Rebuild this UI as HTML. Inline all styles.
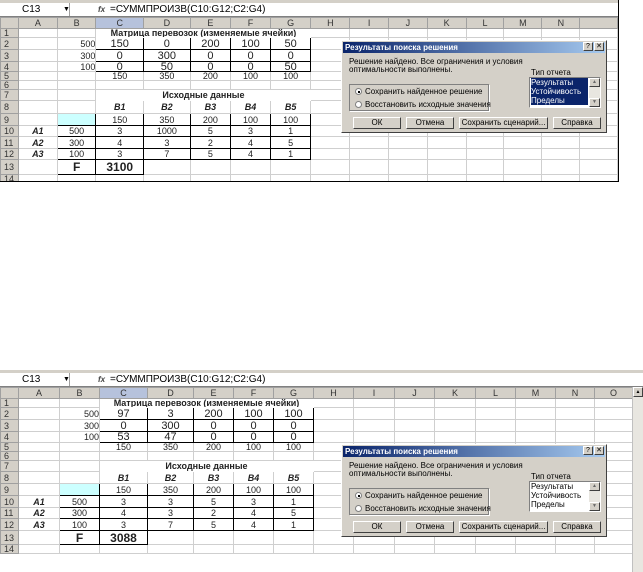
<!DOCTYPE html>
<html><head><meta charset="utf-8"><style>
*{margin:0;padding:0;box-sizing:border-box}
body{width:643px;height:572px;background:#fff;position:relative;overflow:hidden;font-family:"Liberation Sans","DejaVu Sans",sans-serif;}
.sheet{position:absolute;left:0;overflow:hidden;background:#fff}
.tb{position:absolute;left:0;top:0;width:100%;height:3px;background:#d4d0c8}
.fb{position:absolute;left:0;top:3px;width:100%;height:14px;background:#fff;border-bottom:1px solid #808080;font-size:10px;line-height:13px}
.fb .nb{position:absolute;left:0;top:0;width:70px;height:13px;border-right:1px solid #a0a0a0;padding-left:22px}
.fb .ar{position:absolute;left:63px;top:0;font-size:7px}
.fb .fx{position:absolute;left:98px;top:0;font-style:italic;font-weight:bold;font-size:8px;color:#444}
.fb .f{position:absolute;left:110px;top:0}
table{position:absolute;left:0;top:17px;border-collapse:collapse;table-layout:fixed;font-size:9px;color:#222}
td{border:1px solid #cfcfcf;text-align:center;padding:0;overflow:hidden;white-space:nowrap;line-height:8px}
td.h{background:#d4d0c8;border-color:#a0a0a0;color:#333;font-size:9px}
td.hs{background:#b6c2dc}
td.rh{background:#d4d0c8;border-color:#a0a0a0;text-align:left;padding-left:3px;color:#333}
td.r{text-align:right}
td.k{border:1px solid #000}
td.big{font-size:11px}
td.b{font-weight:bold}
td.i{font-style:italic;font-weight:bold}
td.cy{background:#ccffff}
.dlg{position:absolute;left:341px;width:266px;height:93px;background:#d4d0c8;border:1px solid;border-color:#fff #404040 #404040 #fff;font-size:8px;color:#000}
.ttl{position:absolute;left:1px;top:1px;right:1px;height:11px;background:linear-gradient(90deg,#0a246a,#a6caf0);color:#fff;font-weight:bold;font-size:8px;line-height:11px;padding-left:2px}
.tbn{position:absolute;top:1px;width:10px;height:9px;background:#d4d0c8;border:1px solid;border-color:#fff #404040 #404040 #fff;color:#000;font-size:7px;line-height:7px;text-align:center}
.grp{position:absolute;left:7px;top:43px;width:140px;height:27px;border:1px solid #808080;box-shadow:1px 1px 0 #fff}
.rad{position:absolute;left:13px;font-size:8px}
.rad i{display:inline-block;width:7px;height:7px;border-radius:50%;background:#fff;border:1px solid #808080;vertical-align:-1px;margin-right:3px;position:relative}
.btn{position:absolute;top:76px;height:12px;background:#d4d0c8;border:1px solid;border-color:#fff #404040 #404040 #fff;text-align:center;font-size:8px;line-height:10px}
.lb{position:absolute;left:187px;top:36px;width:72px;height:31px;background:#fff;border:1px solid;border-color:#808080 #fff #fff #808080;font-size:8px;line-height:9px;padding-left:1px}
.lb .sb{position:absolute;right:0;top:0;width:11px;height:29px;background:#e8e6e0}
.lb .sb b{position:absolute;left:0;width:11px;height:9px;background:#d4d0c8;border:1px solid;border-color:#fff #404040 #404040 #fff;font-size:5px;text-align:center;line-height:7px;font-weight:normal;color:#666}
.sel{background:#0a246a;color:#fff;width:57px}
</style></head><body>

<div class="sheet" style="top:0;width:619px;height:182px;border-right:1px solid #000;border-bottom:1px solid #000">
<div class="tb"></div>
<div class="fb"><div class="nb">C13</div><div class="ar">▼</div><div class="fx">fx</div><div class="f">=СУММПРОИЗВ(C10:G12;C2:G4)</div></div>
<table>
<colgroup><col style="width:18px"><col style="width:41px"><col style="width:40px"><col style="width:48px"><col style="width:47px"><col style="width:41px"><col style="width:40px"><col style="width:41px"><col style="width:41px"><col style="width:41px"><col style="width:41px"><col style="width:41px"><col style="width:40px"><col style="width:40px"><col style="width:40px"><col style="width:40px"></colgroup>
<tr style="height:11px"><td class="h"></td><td class="h">A</td><td class="h">B</td><td class="h hs">C</td><td class="h">D</td><td class="h">E</td><td class="h">F</td><td class="h">G</td><td class="h">H</td><td class="h">I</td><td class="h">J</td><td class="h">K</td><td class="h">L</td><td class="h">M</td><td class="h">N</td><td class="h"></td></tr>
<tr style="height:9px"><td class="rh">1</td><td></td><td></td><td colspan="5" class="b" style="border-color:#fff">Матрица перевозок (изменяемые ячейки)</td><td></td><td></td><td></td><td></td><td></td><td></td><td></td><td></td></tr>
<tr style="height:12px"><td class="rh">2</td><td></td><td class="r">500</td><td class="k big">150</td><td class="k big">0</td><td class="k big">200</td><td class="k big">100</td><td class="k big">50</td><td></td><td></td><td></td><td></td><td></td><td></td><td></td><td></td></tr>
<tr style="height:12px"><td class="rh">3</td><td></td><td class="r">300</td><td class="k big">0</td><td class="k big">300</td><td class="k big">0</td><td class="k big">0</td><td class="k big">0</td><td></td><td></td><td></td><td></td><td></td><td></td><td></td><td></td></tr>
<tr style="height:10px"><td class="rh">4</td><td></td><td class="r">100</td><td class="k big">0</td><td class="k big">50</td><td class="k big">0</td><td class="k big">0</td><td class="k big">50</td><td></td><td></td><td></td><td></td><td></td><td></td><td></td><td></td></tr>
<tr style="height:8px"><td class="rh">5</td><td></td><td></td><td>150</td><td>350</td><td>200</td><td>100</td><td>100</td><td></td><td></td><td></td><td></td><td></td><td></td><td></td><td></td></tr>
<tr style="height:8px"><td class="rh">6</td><td></td><td></td><td></td><td></td><td></td><td></td><td></td><td></td><td></td><td></td><td></td><td></td><td></td><td></td><td></td></tr>
<tr style="height:11px"><td class="rh">7</td><td></td><td></td><td colspan="5" class="b" style="border-color:#fff">Исходные данные</td><td></td><td></td><td></td><td></td><td></td><td></td><td></td><td></td></tr>
<tr style="height:13px"><td class="rh">8</td><td></td><td></td><td class="i">B1</td><td class="i">B2</td><td class="i">B3</td><td class="i">B4</td><td class="i">B5</td><td></td><td></td><td></td><td></td><td></td><td></td><td></td><td></td></tr>
<tr style="height:12px"><td class="rh">9</td><td></td><td class="k cy"></td><td class="k">150</td><td class="k">350</td><td class="k">200</td><td class="k">100</td><td class="k">100</td><td></td><td></td><td></td><td></td><td></td><td></td><td></td><td></td></tr>
<tr style="height:11px"><td class="rh">10</td><td class="i">A1</td><td class="k">500</td><td class="k">3</td><td class="k">1000</td><td class="k">5</td><td class="k">3</td><td class="k">1</td><td></td><td></td><td></td><td></td><td></td><td></td><td></td><td></td></tr>
<tr style="height:12px"><td class="rh">11</td><td class="i">A2</td><td class="k">300</td><td class="k">4</td><td class="k">3</td><td class="k">2</td><td class="k">4</td><td class="k">5</td><td></td><td></td><td></td><td></td><td></td><td></td><td></td><td></td></tr>
<tr style="height:11px"><td class="rh">12</td><td class="i">A3</td><td class="k">100</td><td class="k">3</td><td class="k">7</td><td class="k">5</td><td class="k">4</td><td class="k">1</td><td></td><td></td><td></td><td></td><td></td><td></td><td></td><td></td></tr>
<tr style="height:15px"><td class="rh hs">13</td><td></td><td class="k b" style="font-size:12px">F</td><td class="k b" style="font-size:12px">3100</td><td></td><td></td><td></td><td></td><td></td><td></td><td></td><td></td><td></td><td></td><td></td><td></td></tr>
<tr style="height:9px"><td class="rh">14</td><td></td><td></td><td></td><td></td><td></td><td></td><td></td><td></td><td></td><td></td><td></td><td></td><td></td><td></td><td></td></tr>
</table>
<div class="dlg" style="top:40px">
<div class="ttl">Результаты поиска решения</div>
<div class="tbn" style="right:13px">?</div><div class="tbn" style="right:2px">✕</div>
<div style="position:absolute;left:7px;top:17px;line-height:8px">Решение найдено. Все ограничения и условия<br>оптимальности выполнены.</div>
<div style="position:absolute;left:189px;top:27px">Тип отчета</div>
<div class="grp"></div>
<div class="rad" style="top:46px"><i><s style="position:absolute;left:2px;top:2px;width:2px;height:2px;background:#000"></s></i>Сохранить найденное решение</div>
<div class="rad" style="top:59px"><i></i>Восстановить исходные значения</div>
<div class="lb"><div class="sel">Результаты</div><div class="sel">Устойчивость</div><div class="sel">Пределы</div><div class="sb"><b style="top:0">▲</b><b style="bottom:0">▼</b></div></div>
<div class="btn" style="left:11px;width:48px">ОК</div>
<div class="btn" style="left:64px;width:48px">Отмена</div>
<div class="btn" style="left:117px;width:89px">Сохранить сценарий...</div>
<div class="btn" style="left:211px;width:48px">Справка</div>
</div>
</div>

<div class="sheet" style="top:370px;width:643px;height:202px">
<div class="tb"></div>
<div class="fb"><div class="nb">C13</div><div class="ar">▼</div><div class="fx">fx</div><div class="f">=СУММПРОИЗВ(C10:G12;C2:G4)</div></div>
<table>
<colgroup><col style="width:18px"><col style="width:41px"><col style="width:40px"><col style="width:48px"><col style="width:46px"><col style="width:40px"><col style="width:40px"><col style="width:40px"><col style="width:40px"><col style="width:41px"><col style="width:40px"><col style="width:41px"><col style="width:40px"><col style="width:40px"><col style="width:39px"><col style="width:38px"></colgroup>
<tr style="height:11px"><td class="h"></td><td class="h">A</td><td class="h">B</td><td class="h hs">C</td><td class="h">D</td><td class="h">E</td><td class="h">F</td><td class="h">G</td><td class="h">H</td><td class="h">I</td><td class="h">J</td><td class="h">K</td><td class="h">L</td><td class="h">M</td><td class="h">N</td><td class="h">O</td></tr>
<tr style="height:9px"><td class="rh">1</td><td></td><td></td><td colspan="5" class="b" style="border-color:#fff">Матрица перевозок (изменяемые ячейки)</td><td></td><td></td><td></td><td></td><td></td><td></td><td></td><td></td></tr>
<tr style="height:12px"><td class="rh">2</td><td></td><td class="r">500</td><td class="k big">97</td><td class="k big">3</td><td class="k big">200</td><td class="k big">100</td><td class="k big">100</td><td></td><td></td><td></td><td></td><td></td><td></td><td></td><td></td></tr>
<tr style="height:12px"><td class="rh">3</td><td></td><td class="r">300</td><td class="k big">0</td><td class="k big">300</td><td class="k big">0</td><td class="k big">0</td><td class="k big">0</td><td></td><td></td><td></td><td></td><td></td><td></td><td></td><td></td></tr>
<tr style="height:11px"><td class="rh">4</td><td></td><td class="r">100</td><td class="k big">53</td><td class="k big">47</td><td class="k big">0</td><td class="k big">0</td><td class="k big">0</td><td></td><td></td><td></td><td></td><td></td><td></td><td></td><td></td></tr>
<tr style="height:8px"><td class="rh">5</td><td></td><td></td><td>150</td><td>350</td><td>200</td><td>100</td><td>100</td><td></td><td></td><td></td><td></td><td></td><td></td><td></td><td></td></tr>
<tr style="height:8px"><td class="rh">6</td><td></td><td></td><td></td><td></td><td></td><td></td><td></td><td></td><td></td><td></td><td></td><td></td><td></td><td></td><td></td></tr>
<tr style="height:11px"><td class="rh">7</td><td></td><td></td><td colspan="5" class="b" style="border-color:#fff">Исходные данные</td><td></td><td></td><td></td><td></td><td></td><td></td><td></td><td></td></tr>
<tr style="height:12px"><td class="rh">8</td><td></td><td></td><td class="i">B1</td><td class="i">B2</td><td class="i">B3</td><td class="i">B4</td><td class="i">B5</td><td></td><td></td><td></td><td></td><td></td><td></td><td></td><td></td></tr>
<tr style="height:12px"><td class="rh">9</td><td></td><td class="k cy"></td><td class="k">150</td><td class="k">350</td><td class="k">200</td><td class="k">100</td><td class="k">100</td><td></td><td></td><td></td><td></td><td></td><td></td><td></td><td></td></tr>
<tr style="height:12px"><td class="rh">10</td><td class="i">A1</td><td class="k">500</td><td class="k">3</td><td class="k">3</td><td class="k">5</td><td class="k">3</td><td class="k">1</td><td></td><td></td><td></td><td></td><td></td><td></td><td></td><td></td></tr>
<tr style="height:11px"><td class="rh">11</td><td class="i">A2</td><td class="k">300</td><td class="k">4</td><td class="k">3</td><td class="k">2</td><td class="k">4</td><td class="k">5</td><td></td><td></td><td></td><td></td><td></td><td></td><td></td><td></td></tr>
<tr style="height:12px"><td class="rh">12</td><td class="i">A3</td><td class="k">100</td><td class="k">3</td><td class="k">7</td><td class="k">5</td><td class="k">4</td><td class="k">1</td><td></td><td></td><td></td><td></td><td></td><td></td><td></td><td></td></tr>
<tr style="height:14px"><td class="rh hs">13</td><td></td><td class="k b" style="font-size:12px">F</td><td class="k b" style="font-size:12px">3088</td><td></td><td></td><td></td><td></td><td></td><td></td><td></td><td></td><td></td><td></td><td></td><td></td></tr>
<tr style="height:9px"><td class="rh">14</td><td></td><td></td><td></td><td></td><td></td><td></td><td></td><td></td><td></td><td></td><td></td><td></td><td></td><td></td><td></td></tr>
</table>
<div style="position:absolute;left:632px;top:17px;width:11px;height:185px;background:#e8e6e0;border-left:1px solid #c0c0c0"><div style="width:10px;height:10px;background:#d4d0c8;border:1px solid;border-color:#fff #404040 #404040 #fff;font-size:5px;text-align:center;line-height:8px">▲</div></div>
<div class="dlg" style="top:74px">
<div class="ttl">Результаты поиска решения</div>
<div class="tbn" style="right:13px">?</div><div class="tbn" style="right:2px">✕</div>
<div style="position:absolute;left:7px;top:17px;line-height:8px">Решение найдено. Все ограничения и условия<br>оптимальности выполнены.</div>
<div style="position:absolute;left:189px;top:27px">Тип отчета</div>
<div class="grp"></div>
<div class="rad" style="top:46px"><i><s style="position:absolute;left:2px;top:2px;width:2px;height:2px;background:#000"></s></i>Сохранить найденное решение</div>
<div class="rad" style="top:59px"><i></i>Восстановить исходные значения</div>
<div class="lb"><div>Результаты</div><div>Устойчивость</div><div>Пределы</div><div class="sb"><b style="top:0">▲</b><b style="bottom:0">▼</b></div></div>
<div class="btn" style="left:11px;width:48px">ОК</div>
<div class="btn" style="left:64px;width:48px">Отмена</div>
<div class="btn" style="left:117px;width:89px">Сохранить сценарий...</div>
<div class="btn" style="left:211px;width:48px">Справка</div>
</div>
</div>
</body></html>
